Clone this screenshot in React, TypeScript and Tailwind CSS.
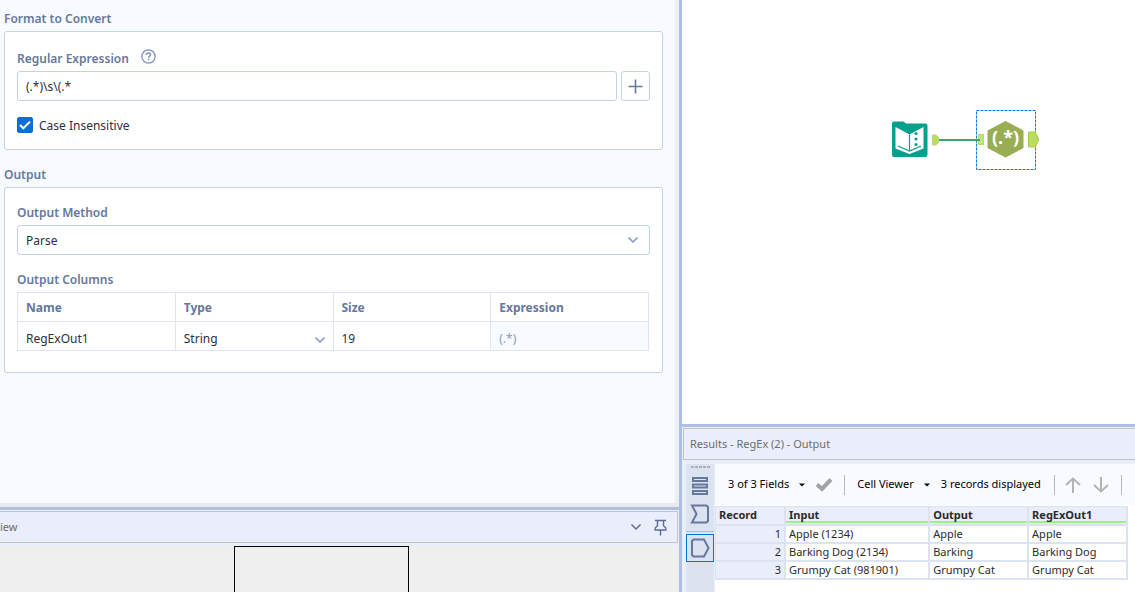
import { useState, type ReactNode } from "react";

const columns = [
  { name: "Input", width: "w-[35%]" },
  { name: "Output", width: "w-[24%]" },
  { name: "RegExOut1", width: "w-[24%]" },
];

const records = [
  { input: "Apple (1234)", output: "Apple", parsed: "Apple" },
  { input: "Barking Dog (2134)", output: "Barking", parsed: "Barking Dog" },
  { input: "Grumpy Cat (981901)", output: "Grumpy Cat", parsed: "Grumpy Cat" },
];

function Chevron({ className = "" }: { className?: string }) {
  return (
    <svg className={className} width="12" height="8" viewBox="0 0 12 8" fill="none" stroke="currentColor" strokeWidth="1.5">
      <path d="M1.5 1.5 6 6l4.5-4.5" />
    </svg>
  );
}

function Caret() {
  return (
    <svg width="6" height="4" viewBox="0 0 6 4" fill="#000">
      <path d="M0 .5h6L3 3.5Z" />
    </svg>
  );
}

function Card({ title, className = "", children }: { title: string; className?: string; children: ReactNode }) {
  return (
    <section className={className}>
      <h2 className="mb-[2px] font-semibold leading-5 text-[#66789c]">{title}</h2>
      <div className="rounded-[3px] border border-[#c5d1e8] bg-white px-3">{children}</div>
    </section>
  );
}

function ConfigPanel() {
  const [expression, setExpression] = useState("(.*)\\s\\(.*");
  const [insensitive, setInsensitive] = useState(true);

  return (
    <div className="min-h-0 flex-1 border-r-4 border-[#ebeef7] bg-[#f7faff] pl-1 pr-3 pt-[9px] font-['Noto_Sans',sans-serif] text-xs text-[#2b2f3a]">
      <Card title="Format to Convert">
        <div className="pb-[15px] pt-[17px]">
          <div className="mb-[2px] flex h-5 items-center gap-3">
            <label htmlFor="regex" className="font-semibold leading-5 text-[#66789c]">
              Regular Expression
            </label>
            <button type="button" aria-label="Help" className="mb-[6px] text-[#7f93bf]">
              <svg className="block" width="15" height="15" viewBox="0 0 15 15" fill="none" stroke="currentColor" strokeWidth="1.3">
                <circle cx="7.5" cy="7.5" r="6.6" />
                <path d="M5.4 5.9c0-1.2.9-2 2.1-2s2.1.8 2.1 1.8c0 1.4-2 1.5-2 3" strokeWidth="1.5" />
                <path d="M7.6 9.7v1.5" strokeWidth="1.5" />
              </svg>
            </button>
          </div>
          <div className="flex gap-1">
            <input
              id="regex"
              type="text"
              value={expression}
              onChange={(e) => setExpression(e.target.value)}
              className="h-[30px] min-w-0 flex-1 rounded-[3px] border border-[#c5d1e8] px-2 outline-none"
            />
            <button
              type="button"
              aria-label="Add expression"
              className="flex h-[30px] w-[29px] items-center justify-center rounded-[3px] border border-[#c5d1e8] text-[#66789c]"
            >
              <svg width="15" height="15" viewBox="0 0 15 15" stroke="currentColor" strokeWidth="1.6">
                <path d="M7.5 .5v14M.5 7.5h14" />
              </svg>
            </button>
          </div>
          <label className="mt-4 flex items-start gap-[6px]">
            <span className="relative flex h-4 w-4">
              <input
                type="checkbox"
                checked={insensitive}
                onChange={(e) => setInsensitive(e.target.checked)}
                className="peer h-4 w-4 appearance-none rounded-[2px] border border-[#0c6fd1] checked:bg-[#0c6fd1]"
              />
              <svg
                className="pointer-events-none absolute inset-0 hidden peer-checked:block"
                width="16"
                height="16"
                viewBox="0 0 16 16"
                fill="none"
                stroke="#fff"
                strokeWidth="2"
              >
                <path d="m3 8 3.3 3.3L13 4.6" />
              </svg>
            </span>
            <span className="pt-px leading-4">Case Insensitive</span>
          </label>
        </div>
      </Card>

      <Card title="Output" className="mt-[15px]">
        <div className="pb-[21px] pt-[15px]">
          <label htmlFor="method" className="mb-[2px] block font-semibold leading-5 text-[#66789c]">
            Output Method
          </label>
          <div className="relative">
            <select
              id="method"
              className="block h-[30px] w-full appearance-none rounded-[3px] border border-[#c5d1e8] px-2 pt-[2px] outline-none"
            >
              <option>Parse</option>
              <option>Match</option>
              <option>Replace</option>
              <option>Tokenize</option>
            </select>
            <Chevron className="pointer-events-none absolute right-[11px] top-[11px] text-[#7f93bf]" />
          </div>
          <h3 className="mb-[2px] mt-[15px] font-semibold leading-5 text-[#66789c]">Output Columns</h3>
          <div className="pr-px">
            <table className="w-full table-fixed border-collapse text-left">
              <thead>
                <tr className="h-[29px] font-semibold text-[#66789c]">
                  <th className="border border-[#dde4f2] px-2 pt-px">Name</th>
                  <th className="border border-[#dde4f2] px-2 pt-px">Type</th>
                  <th className="border border-[#dde4f2] px-2 pt-px">Size</th>
                  <th className="border border-[#dde4f2] px-2 pt-px">Expression</th>
                </tr>
              </thead>
              <tbody>
                <tr className="h-[29px]">
                  <td className="border border-[#dde4f2] px-2 pt-[6px] leading-5">RegExOut1</td>
                  <td className="border border-[#dde4f2] p-0">
                    <div className="relative">
                      <select aria-label="Type" className="block w-full appearance-none px-2 pt-[6px] leading-5 outline-none">
                        <option>String</option>
                        <option>Int32</option>
                        <option>Double</option>
                      </select>
                      <Chevron className="pointer-events-none absolute right-[7px] top-[13px] text-[#7f93bf]" />
                    </div>
                  </td>
                  <td className="border border-[#dde4f2] px-2 pt-[6px] leading-5">19</td>
                  <td className="border border-[#dde4f2] bg-[#f7faff] px-2 pt-[6px] leading-5 text-[#8b9bbf]">(.*)</td>
                </tr>
              </tbody>
            </table>
          </div>
        </div>
      </Card>
    </div>
  );
}

function OverviewPanel() {
  return (
    <div className="flex h-[82px] shrink-0 flex-col border-t border-[#ebeef7] pr-px">
      <header className="flex h-8 shrink-0 items-center justify-between border-y border-r border-[#c3c3c3] pr-[10px] text-[#6d6d6d]">
        <span className="text-[11px]">iew</span>
        <div className="flex items-center gap-3 text-[#5c6c92]">
          <button type="button" aria-label="Collapse">
            <Chevron />
          </button>
          <button type="button" aria-label="Pin">
            <svg className="block" width="13" height="17" viewBox="0 0 13 17" fill="none" stroke="currentColor" strokeWidth="1.4">
              <path d="M1 1.5h11M3.5 1.5v5.2L1.2 9v2h10.6V9L9.5 6.7V1.5M6.5 11v5.5" />
            </svg>
          </button>
        </div>
      </header>
      <div className="mt-[3px] grid flex-1 grid-cols-[234fr_175fr_269fr] bg-[#efefef]">
        <div className="col-start-2 border border-b-0 border-black" />
      </div>
    </div>
  );
}

function WorkflowCanvas() {
  return (
    <div className="relative min-h-0 flex-1 bg-white">
      <svg className="absolute left-[209px] top-[110px]" width="150" height="60" viewBox="0 0 150 60">
        {/* text input tool */}
        <path d="M3 11.5h9.5l2.5 2h19.5a2 2 0 0 1 2 2V45a2 2 0 0 1-2 2H3a2 2 0 0 1-2-2V13.5a2 2 0 0 1 2-2Z" fill="#07a08d" />
        <path d="M4.5 17l14 7.5 14-7.5v21.5l-14 5.5-14-5.5Z" fill="#fff" />
        <path d="M18.5 24.5V41M7 36l11.5 5L30 36" fill="none" stroke="#07a08d" strokeWidth="1.2" />
        <g fill="#07a08d">
          <circle cx="25" cy="23.5" r="1.6" />
          <circle cx="25" cy="29" r="1.6" />
          <circle cx="25" cy="34.5" r="1.6" />
        </g>
        <path d="M41.5 25h3.5l2.5 2.5v5L45 35h-3.5Z" fill="#b9dc62" stroke="#b4d873" />
        {/* regex tool */}
        <rect x="85.5" y=".5" width="59" height="59" fill="none" stroke="#1078d0" strokeDasharray="3 1" />
        <rect x="87.5" y="24.5" width="5" height="10" fill="#c5e57c" stroke="#b4db65" />
        <path d="M48 30h41" stroke="#3fa565" strokeWidth="2" />
        <path d="m114.5 11 18 9.5V38l-18 9.500-18-9.500V20.5Z" fill="#99ad55" />
        <text
          x="114.5"
          y="34"
          textAnchor="middle"
          fill="#fff"
          fontSize="18"
          fontWeight="700"
          fontFamily="Noto Sans, sans-serif"
        >
          (.*)
        </text>
        <path d="M137.5 22h6.5l3.5 6.5v2L144 37h-6.500Z" fill="#b9dc62" stroke="#a3cc4c" />
      </svg>
    </div>
  );
}

function ResultsSidebar() {
  return (
    <div className="flex w-7 shrink-0 flex-col items-center bg-[#dce3f0] text-[#66779c]">
      <svg className="mt-[2px]" width="19" height="2" viewBox="0 0 19 2" stroke="#b0b0b0" strokeWidth="2" strokeDasharray="3 1">
        <path d="M0 1h19" />
      </svg>
      <button type="button" aria-label="Messages" className="mt-2">
        <svg className="block" width="18" height="20" viewBox="0 0 18 20" fill="none" stroke="currentColor" strokeWidth="2">
          <path d="M2 2h14v3H2zM2 8.5h14v3H2zM2 15h14v3H2z" />
        </svg>
      </button>
      <button type="button" aria-label="Input anchor" className="mt-2 border-b border-[#b8b8b8] px-1 pb-[7px]">
        <svg className="block" width="20" height="20" viewBox="0 0 20 20" fill="none" stroke="currentColor" strokeWidth="2">
          <path d="M2 1.5h14.500l1.5 1.5v14l-1.5 1.5H2L6.500 10Z" />
        </svg>
      </button>
      <button
        type="button"
        aria-label="Output anchor"
        className="mt-[2px] flex h-7 w-7 items-center justify-center border border-[#0078d7]"
      >
        <svg width="20" height="20" viewBox="0 0 20 20" fill="none" stroke="currentColor" strokeWidth="2">
          <path d="M3.5 1.5H14l4.5 8.5-4.5 8.5H3.5L2 17V3Z" />
        </svg>
      </button>
    </div>
  );
}

function ResultsPanel() {
  return (
    <div className="flex h-[168px] shrink-0 flex-col border-t-3 border-[#afbfe1] pl-px pt-px">
      <header className="flex h-8 shrink-0 items-center border-y border-l border-[#c3c3c3] pl-[6px] text-[11px] text-[#6d6d6d]">
        Results - RegEx (2) - Output
      </header>
      <div className="flex min-h-0 flex-1 pl-[3px] pt-1">
        <ResultsSidebar />
        <div className="ml-px flex-1 bg-white text-[11px]">
          <div className="flex h-[41px] items-center whitespace-nowrap bg-[#f7faff] pl-[13px] text-black">
            <button type="button" className="flex items-center gap-[10px]">
              3 of 3 Fields <Caret />
            </button>
            <button type="button" aria-label="Apply" className="ml-[10px]">
              <svg className="block" width="18" height="14" viewBox="0 0 18 14" fill="none" stroke="#a3a3a3" strokeWidth="4">
                <path d="m2 6.5 5 4.5 9-9.5" />
              </svg>
            </button>
            <span className="ml-[11px] mr-3 h-5 w-px bg-[#b9b9b9]" />
            <button type="button" className="flex items-center gap-[10px]">
              Cell Viewer <Caret />
            </button>
            <span className="ml-[11px]">3 records displayed</span>
            <span className="ml-[13px] mr-[10px] h-5 w-px bg-[#b9b9b9]" />
            <button type="button" aria-label="Previous">
              <svg className="block" width="16" height="16" viewBox="0 0 16 16" fill="none" stroke="#b3b3b3" strokeWidth="2">
                <path d="M8 16V1.5M1 8l7-6.5L15 8" />
              </svg>
            </button>
            <button type="button" aria-label="Next" className="ml-3">
              <svg className="block" width="16" height="16" viewBox="0 0 16 16" fill="none" stroke="#b3b3b3" strokeWidth="2">
                <path d="M8 0v14.5M1 8l7 6.5L15 8" />
              </svg>
            </button>
            <span className="ml-3 h-5 w-px bg-[#b9b9b9]" />
          </div>
          <div className="mr-[7px] mt-px">
            <table className="w-full table-fixed border-separate border-spacing-0 border-l border-t border-[#dce3f0] text-left text-[#2b2b2b]">
              <thead>
                <tr className="h-[19px] bg-[#eaeefa] align-top font-bold leading-4">
                  <th className="w-[17%] border-b-2 border-r-2 border-[#dce3f0] p-0 pl-[3px]">Record</th>
                  {columns.map((column) => (
                    <th key={column.name} className={`border-b-2 border-r-2 border-[#dce3f0] p-0 ${column.width}`}>
                      <div className="h-4 border-b-2 border-[#98f57c] pl-[3px]">{column.name}</div>
                    </th>
                  ))}
                </tr>
              </thead>
              <tbody>
                {records.map((record, i) => (
                  <tr key={record.input} className="h-[18px] leading-4">
                    <td className="border-b-2 border-r-2 border-[#dce3f0] bg-[#eaeefa] pr-[3px] text-right">{i + 1}</td>
                    <td className="border-b-2 border-r-2 border-[#dce3f0] pl-[3px]">{record.input}</td>
                    <td className="border-b-2 border-r-2 border-[#dce3f0] pl-[3px]">{record.output}</td>
                    <td className="border-b-2 border-r-2 border-[#dce3f0] pl-[3px]">{record.parsed}</td>
                  </tr>
                ))}
              </tbody>
            </table>
          </div>
        </div>
      </div>
    </div>
  );
}

export default function App() {
  return (
    <main className="grid h-screen grid-cols-[minmax(0,682fr)_minmax(0,453fr)] overflow-hidden bg-[#eaeefa] font-['Noto_Sans',sans-serif]">
      <div className="flex min-h-0 flex-col border-r-3 border-[#afbfe1]">
        <ConfigPanel />
        <div className="h-[7px] shrink-0 border-b-3 border-[#afbfe1] bg-[#e8eaf0]" />
        <OverviewPanel />
      </div>
      <div className="flex min-h-0 flex-col">
        <WorkflowCanvas />
        <ResultsPanel />
      </div>
    </main>
  );
}
